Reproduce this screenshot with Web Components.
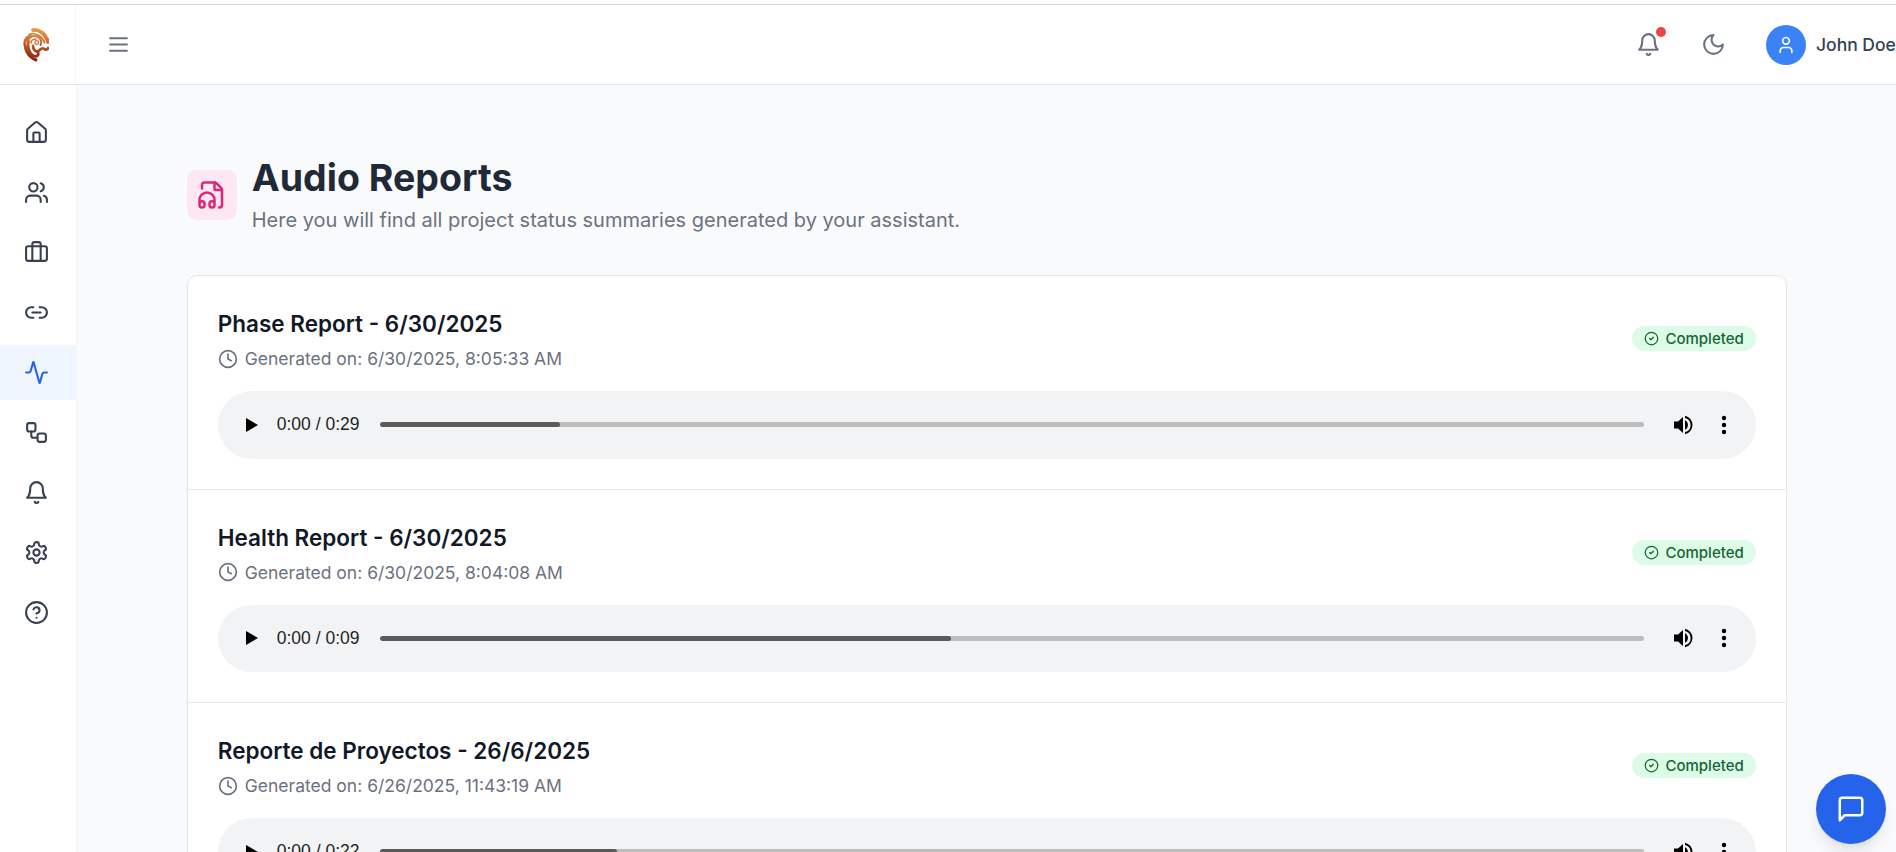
<!doctype html>
<html lang="en">
<head>
<meta charset="utf-8">
<title>Audio Reports</title>
<style>
html,body{margin:0;height:100%;overflow:hidden;background:#f9fafb;font-family:Inter,"Liberation Sans",sans-serif}
</style>
</head>
<body>
<app-shell>
  <app-topbar slot="top"></app-topbar>
  <app-sidebar slot="side">
    <nav-item icon="home"></nav-item>
    <nav-item icon="users"></nav-item>
    <nav-item icon="briefcase"></nav-item>
    <nav-item icon="link"></nav-item>
    <nav-item icon="activity" active></nav-item>
    <nav-item icon="workflow"></nav-item>
    <nav-item icon="bell"></nav-item>
    <nav-item icon="settings"></nav-item>
    <nav-item icon="help"></nav-item>
  </app-sidebar>
  <page-heading title="Audio Reports" subtitle="Here you will find all project status summaries generated by your assistant."></page-heading>
  <report-list>
    <report-item title="Phase Report - 6/30/2025" generated="Generated on: 6/30/2025, 8:05:33 AM" time="0:00 / 0:29" fill="180"></report-item>
    <report-item title="Health Report - 6/30/2025" generated="Generated on: 6/30/2025, 8:04:08 AM" time="0:00 / 0:09" fill="571"></report-item>
    <report-item title="Reporte de Proyectos - 26/6/2025" generated="Generated on: 6/26/2025, 11:43:19 AM" time="0:00 / 0:22" fill="237"></report-item>
  </report-list>
</app-shell>
<chat-fab></chat-fab>
<script>
const ICONS={
home:'<path d="M15 21v-8a1 1 0 0 0-1-1h-4a1 1 0 0 0-1 1v8"/><path d="M3 10a2 2 0 0 1 .709-1.528l7-5.999a2 2 0 0 1 2.582 0l7 5.999A2 2 0 0 1 21 10v9a2 2 0 0 1-2 2H5a2 2 0 0 1-2-2z"/>',
users:'<path d="M16 21v-2a4 4 0 0 0-4-4H6a4 4 0 0 0-4 4v2"/><circle cx="9" cy="7" r="4"/><path d="M22 21v-2a4 4 0 0 0-3-3.87"/><path d="M16 3.13a4 4 0 0 1 0 7.75"/>',
briefcase:'<path d="M16 20V4a2 2 0 0 0-2-2h-4a2 2 0 0 0-2 2v16"/><rect x="2" y="6" width="20" height="14" rx="2"/>',
link:'<path d="M9 17H7A5 5 0 0 1 7 7h2"/><path d="M15 7h2a5 5 0 1 1 0 10h-2"/><line x1="8" x2="16" y1="12" y2="12"/>',
activity:'<path d="M22 12h-2.48a2 2 0 0 0-1.93 1.46l-2.35 8.36a.25.25 0 0 1-.48 0L9.24 2.18a.25.25 0 0 0-.48 0l-2.35 8.36A2 2 0 0 1 4.49 12H2"/>',
workflow:'<rect x="3" y="3" width="8" height="8" rx="2"/><path d="M7 11v4a2 2 0 0 0 2 2h4"/><rect x="13" y="13" width="8" height="8" rx="2"/>',
bell:'<path d="M6 8a6 6 0 0 1 12 0c0 7 3 9 3 9H3s3-2 3-9"/><path d="M10.3 21a1.94 1.94 0 0 0 3.4 0"/>',
settings:'<path d="M12.22 2h-.44a2 2 0 0 0-2 2v.18a2 2 0 0 1-1 1.73l-.43.25a2 2 0 0 1-2 0l-.15-.08a2 2 0 0 0-2.73.73l-.22.38a2 2 0 0 0 .73 2.73l.15.1a2 2 0 0 1 1 1.72v.51a2 2 0 0 1-1 1.74l-.15.09a2 2 0 0 0-.73 2.73l.22.38a2 2 0 0 0 2.73.73l.15-.08a2 2 0 0 1 2 0l.43.25a2 2 0 0 1 1 1.73V20a2 2 0 0 0 2 2h.44a2 2 0 0 0 2-2v-.18a2 2 0 0 1 1-1.73l.43-.25a2 2 0 0 1 2 0l.15.08a2 2 0 0 0 2.73-.73l.22-.39a2 2 0 0 0-.73-2.73l-.15-.08a2 2 0 0 1-1-1.74v-.5a2 2 0 0 1 1-1.74l.15-.09a2 2 0 0 0 .73-2.73l-.22-.38a2 2 0 0 0-2.73-.73l-.15.08a2 2 0 0 1-2 0l-.43-.25a2 2 0 0 1-1-1.73V4a2 2 0 0 0-2-2z"/><circle cx="12" cy="12" r="3"/>',
help:'<circle cx="12" cy="12" r="10"/><path d="M9.09 9a3 3 0 0 1 5.83 1c0 2-3 3-3 3"/><path d="M12 17h.01"/>',
menu:'<line x1="4" x2="20" y1="12" y2="12"/><line x1="4" x2="20" y1="6" y2="6"/><line x1="4" x2="20" y1="18" y2="18"/>',
moon:'<path d="M12 3a6 6 0 0 0 9 9 9 9 0 1 1-9-9Z"/>',
user:'<path d="M19 21v-2a4 4 0 0 0-4-4H9a4 4 0 0 0-4 4v2"/><circle cx="12" cy="7" r="4"/>',
clock:'<circle cx="12" cy="12" r="10"/><polyline points="12 6 12 12 16 14"/>',
check:'<circle cx="12" cy="12" r="10"/><path d="m9 12 2 2 4-4"/>',
file:'<path d="M4 6.835V4a2 2 0 0 1 2-2h8a2.4 2.4 0 0 1 1.706.706l3.588 3.588A2.4 2.4 0 0 1 20 8v12a2 2 0 0 1-2 2h-.343"/><path d="M14 2v5a1 1 0 0 0 1 1h5"/><path d="M2 19a2 2 0 0 1 4 0v1a2 2 0 0 1-4 0v-4a6 6 0 0 1 12 0v4a2 2 0 0 1-4 0v-1a2 2 0 0 1 4 0"/>',
chat:'<path d="M21 15a2 2 0 0 1-2 2H7l-4 4V5a2 2 0 0 1 2-2h14a2 2 0 0 1 2 2z"/>'
};
const svg=(n,s,w=2)=>`<svg xmlns="http://www.w3.org/2000/svg" width="${s}" height="${s}" viewBox="0 0 24 24" fill="none" stroke="currentColor" stroke-width="${w}" stroke-linecap="round" stroke-linejoin="round" style="display:block;flex:none">${ICONS[n]}</svg>`;
class Base extends HTMLElement{
  constructor(){super();this.attachShadow({mode:'open'});}
  a(n){return this.getAttribute(n)||'';}
}
customElements.define('app-shell',class extends Base{connectedCallback(){this.shadowRoot.innerHTML=`<style>
:host{display:block;height:100vh;overflow:hidden}
.strip{height:4px;background:#fff;border-bottom:1px solid #d1d5db}
.body{display:grid;grid-template-columns:77px 1fr;height:767px}
main{padding:70px 0 0 109.75px;overflow:hidden;min-width:0}
</style><div class="strip"></div><slot name="top"></slot>
<div class="body"><slot name="side"></slot><main><slot></slot></main></div>`;}});
customElements.define('app-topbar',class extends Base{connectedCallback(){this.shadowRoot.innerHTML=`<style>
:host{display:flex;align-items:center;height:79px;background:#fff;border-bottom:1px solid #e5e7eb;color:#6b7280;overflow:hidden}
.logo{width:76px;height:100%;box-sizing:border-box;padding-right:4px;display:flex;align-items:center;justify-content:center;border-right:1px solid #f3f4f6;flex:none}
.menu{margin-left:30px}
.right{margin-left:auto;display:flex;align-items:center}
.bell{position:relative;margin-right:40px}
.dot{position:absolute;top:-5px;right:-5px;width:10px;height:10px;border-radius:50%;background:#ef4444}
.moon{margin-right:40px}
.av{width:40px;height:40px;border-radius:50%;background:#3b82f6;color:#fff;display:flex;align-items:center;justify-content:center;margin-right:10px;flex:none}
.name{font-size:17.5px;font-weight:500;color:#374151;width:80px;white-space:nowrap}
</style>
<div class="logo"><svg xmlns="http://www.w3.org/2000/svg" width="26" height="35" viewBox="0 0 26 35" fill="none" stroke-linecap="round">
<defs><linearGradient id="g" gradientUnits="userSpaceOnUse" x1="14" y1="1" x2="12" y2="35"><stop offset="0" stop-color="#e3a04f"/><stop offset=".4" stop-color="#cf6a2e"/><stop offset=".7" stop-color="#a63a1a"/><stop offset="1" stop-color="#8a2010"/></linearGradient></defs>
<g stroke="url(#g)">
<path d="M10 3C16 2 23 7 25 15" stroke-width="3.800"/>
<path d="M6 7.500C12 5 19 9 21.500 15.500" stroke-width="1.800"/>
<path d="M5 15C5 10 10 8 14 9.500C18 11 19 15 17.500 18" stroke-width="2"/>
<circle cx="13.700" cy="15.500" r="1.800" stroke-width="1.200"/>
<path d="M2.500 20C.5 14 3.500 9.500 8 9" stroke-width="3"/>
<path d="M8 16C8 13 11 12 13 12" stroke-width="1.500"/>
<path d="M5.500 14C4 20 6 27 11 29C14 30 16 28 15 26" stroke-width="2.800"/>
<path d="M2.500 21C3.500 26 6 30 13 33" stroke-width="3"/>
<path d="M10 19C10 23 13 25.500 15.500 24C18 22 19 20 21 22C23 23 25 22.500 25 21" stroke-width="2.800"/>
</g></svg></div>
<div class="menu">${svg('menu',25)}</div>
<div class="right">
<div class="bell">${svg('bell',25)}<span class="dot"></span></div>
<div class="moon">${svg('moon',25)}</div>
<div class="av">${svg('user',20)}</div>
<div class="name">John Doe</div>
</div>`;}});
customElements.define('app-sidebar',class extends Base{connectedCallback(){this.shadowRoot.innerHTML=`<style>
:host{display:flex;flex-direction:column;gap:5px;background:#fff;border-right:1px solid #f3f4f6;padding-top:20px;box-sizing:border-box;width:77px}
</style><slot></slot>`;}});
customElements.define('nav-item',class extends Base{connectedCallback(){this.shadowRoot.innerHTML=`<style>
:host{display:flex;align-items:center;justify-content:center;height:55px;padding-right:4px;color:#374151}
:host([active]){background:#eff6ff;color:#2563eb}
</style>${svg(this.a('icon'),25)}`;}});
customElements.define('page-heading',class extends Base{connectedCallback(){this.shadowRoot.innerHTML=`<style>
:host{display:flex;align-items:center;gap:15px;margin-bottom:40px;width:1600px}
.ic{width:50px;height:50px;border-radius:10px;background:#fce7f3;color:#db2777;display:flex;align-items:center;justify-content:center;flex:none}
h1{margin:0 0 5px;font-size:37.5px;line-height:45px;font-weight:700;color:#1f2937}
p{margin:0;font-size:20px;line-height:30px;color:#6b7280}
</style><div class="ic">${svg('file',30)}</div><div><h1>${this.a('title')}</h1><p>${this.a('subtitle')}</p></div>`;}});
customElements.define('report-list',class extends Base{connectedCallback(){this.shadowRoot.innerHTML=`<style>
:host{display:block;width:1600px;box-sizing:border-box;background:#fff;border:1px solid #e5e7eb;border-radius:10px;overflow:hidden;box-shadow:0 1px 2px rgba(0,0,0,.04)}
::slotted(report-item:not(:last-child)){border-bottom:1px solid #e5e7eb}
</style><slot></slot>`;}});
customElements.define('status-badge',class extends Base{connectedCallback(){this.shadowRoot.innerHTML=`<style>
:host{display:inline-flex;align-items:center;gap:6px;height:25px;padding:0 12px 0 12px;border-radius:999px;background:#dcfce7;color:#166534;font-size:15px;font-weight:500;box-sizing:border-box;white-space:nowrap}
</style>${svg('check',15)}<slot></slot>`;}});
customElements.define('audio-player',class extends Base{connectedCallback(){this.shadowRoot.innerHTML=`<style>
:host{display:flex;align-items:center;height:67.5px;background:#f1f3f4;border-radius:34px;padding:0 0 0 28px;box-sizing:border-box;color:#000}
.play{width:0;height:0;border-left:12px solid #000;border-top:7.5px solid transparent;border-bottom:7.5px solid transparent;flex:none}
.time{margin-left:19px;width:103px;flex:none;font-family:"Liberation Sans",Arial,sans-serif;font-size:17.5px;color:#1f1f1f;white-space:nowrap}
.track{flex:none;width:1264px;height:5px;border-radius:3px;background:#bdbdbd;overflow:hidden}
.fill{height:100%;background:#5a5a5a;border-radius:3px}
.vol{margin-left:30px;flex:none}
.more{margin-left:27px;flex:none}
</style><div class="play"></div><div class="time">${this.a('time')}</div>
<div class="track"><div class="fill" style="width:${this.a('fill')}px"></div></div>
<svg class="vol" width="20" height="20" viewBox="0 0 20 20" fill="#000"><path d="M0 6.5h4L9 2v16l-5-4.5H0z"/><path d="M11 5.2a5.4 5.4 0 0 1 0 9.6z"/><path d="M11 .8v2.1a7.3 7.3 0 0 1 0 14.2v2.1a9.4 9.4 0 0 0 0-18.400z"/></svg>
<svg class="more" width="6" height="20" viewBox="0 0 6 20" fill="#000"><circle cx="3" cy="3" r="2.200"/><circle cx="3" cy="10" r="2.200"/><circle cx="3" cy="17" r="2.200"/></svg>`;}});
customElements.define('report-item',class extends Base{connectedCallback(){this.shadowRoot.innerHTML=`<style>
:host{display:block;padding:30px}
.head{display:flex;justify-content:space-between;align-items:center;height:65px;margin-bottom:20px}
h3{margin:0 0 5px;font-size:22.5px;line-height:35px;font-weight:600;color:#111827}
.meta{display:flex;align-items:center;gap:7px;font-size:17.5px;line-height:25px;color:#6b7280}
</style><div class="head"><div><h3>${this.a('title')}</h3><div class="meta">${svg('clock',20)}<span>${this.a('generated')}</span></div></div><status-badge>Completed</status-badge></div>
<audio-player time="${this.a('time')}" fill="${this.a('fill')}"></audio-player>`;}});
customElements.define('chat-fab',class extends Base{connectedCallback(){this.shadowRoot.innerHTML=`<style>
:host{position:fixed;left:1816px;top:774px;width:70px;height:70px;border-radius:50%;background:#2563eb;color:#fff;display:flex;align-items:center;justify-content:center;box-shadow:0 10px 15px -3px rgba(0,0,0,.1),0 4px 6px -4px rgba(0,0,0,.1)}
</style>${svg('chat',30)}`;}});
</script>
</body>
</html>
